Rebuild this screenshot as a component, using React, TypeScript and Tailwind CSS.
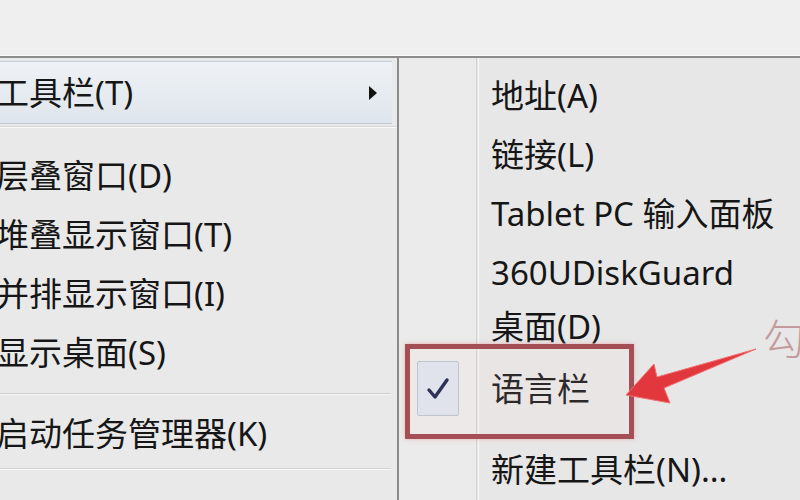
const font = { fontFamily: '"Noto Sans", "Noto Sans CJK SC", sans-serif' };

const Sep = ({ h, line }: { h: string; line: string }) => (
  <div className={`${h} flex flex-col`}>
    <div className={line} />
  </div>
);

const LeftRow = ({ label }: { label: string }) => (
  <div className="h-[59px] flex items-center -ml-[4px] text-[33px] text-[#161616] whitespace-nowrap">{label}</div>
);

const RightRow = ({ label, checked }: { label: string; checked?: boolean }) => (
  <div className="h-[59px] flex items-center">
    <div className="w-[80px] h-full flex items-center justify-center">
      {checked && (
        <div className="w-[42px] h-[55px] ml-[-2px] bg-[#dde5ee] border border-[#b6c3d1] rounded-[2px] flex items-center justify-center">
          <svg width="24" height="24" viewBox="0 0 24 24">
            <path d="M3 13 L9 20 L21 3" fill="none" stroke="#18204a" strokeWidth="3.4" strokeLinecap="round" strokeLinejoin="round" />
          </svg>
        </div>
      )}
    </div>
    <div className="pl-[12px] text-[33px] text-[#161616] whitespace-nowrap">{label}</div>
  </div>
);

export default function App() {
  return (
    <div className="relative w-[800px] h-[500px] overflow-hidden bg-[#efefef] flex flex-col" style={font}>
      {/* area above the menus */}
      <div className="h-[56px] shrink-0 bg-[#efefef] border-b border-[#fafafa]" />

      <div className="flex flex-1 border-t-[2px] border-[#8c8c8c]">
        {/* main context menu */}
        <div className="w-[399px] shrink-0 bg-[#e9e9e9] border-r-[2px] border-[#8a8a8a] pt-[3px]">
          <div className="h-[63px] mr-[5px] flex items-center justify-between bg-gradient-to-b from-[#eef2f6] to-[#dfe5ec] border-y border-[#c3ccd6]">
            <span className="-ml-[4px] text-[33px] text-[#161616]">工具栏(T)</span>
            <svg width="10" height="16" viewBox="0 0 10 16" className="mr-[14px]">
              <path d="M1 1 L9 8 L1 15 Z" fill="#111" />
            </svg>
          </div>
          <Sep h="h-[22px]" line="h-[2px] mt-[2px] bg-[#f7f7f7] border-t border-[#d8d8d8]" />
          <LeftRow label="层叠窗口(D)" />
          <LeftRow label="堆叠显示窗口(T)" />
          <LeftRow label="并排显示窗口(I)" />
          <LeftRow label="显示桌面(S)" />
          <Sep h="h-[22px]" line="h-[2px] mt-[11px] mr-[6px] bg-[#f8f8f8] border-t border-[#cdcdcd]" />
          <LeftRow label="启动任务管理器(K)" />
          <Sep h="h-[10px]" line="h-[2px] mt-[5px] mr-[6px] bg-[#f8f8f8] border-t border-[#d4d4d4]" />
        </div>

        {/* toolbars submenu */}
        <div className="flex-1 relative bg-[#e7e7e7] pt-[8px]">
          <div className="absolute left-0 top-0 bottom-0 w-[78px] bg-[#ebebeb] border-r border-[#d2d2d2]" />
          <div className="absolute left-[79px] top-0 bottom-0 w-[1px] bg-[#f7f7f7]" />
          <div className="relative">
            <RightRow label="地址(A)" />
            <RightRow label="链接(L)" />
            <RightRow label="Tablet PC 输入面板" />
            <RightRow label="360UDiskGuard" />
            <div className="-mt-[5px]">
              <RightRow label="桌面(D)" />
            </div>
            <div className="mt-[3px]">
              <RightRow label="语言栏" checked />
            </div>
            <div className="h-[22px]" />
            <RightRow label="新建工具栏(N)..." />
          </div>
        </div>
      </div>

      {/* annotation: red box, arrow and label */}
      <div className="absolute left-[405px] top-[344px] w-[229px] h-[95px] border-[5px] border-[#a34f55] bg-[#ffd6d6]/10 shadow-[0_0_4px_rgba(240,120,120,0.5)]" />
      <svg className="absolute left-0 top-0" width="800" height="500" viewBox="0 0 800 500">
        <path
          d="M626 395 L654 364 L657 377 L756 349 L664 388 L670 403 Z"
          fill="#e2383d"
          stroke="#f07070"
          strokeWidth="1"
          strokeLinejoin="round"
        />
      </svg>
      <div className="absolute left-[763px] top-[318px] text-[42px] font-light text-[#c49a9c] leading-none">勾</div>
    </div>
  );
}
